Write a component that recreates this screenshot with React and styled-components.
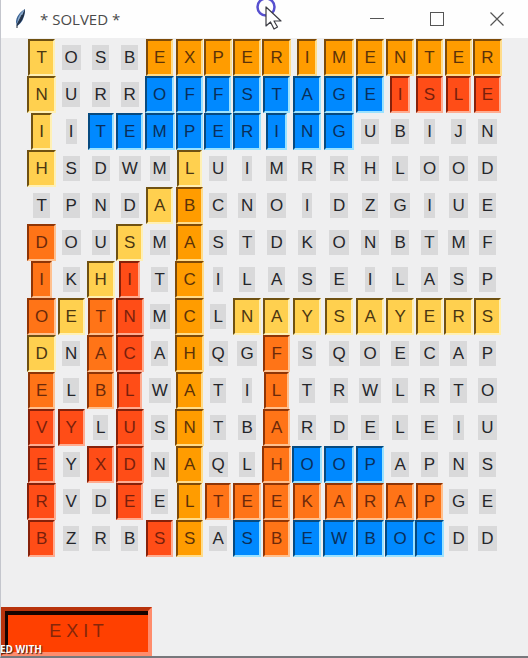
import React from "react";
import styled, { createGlobalStyle } from "styled-components";

const GlobalStyle = createGlobalStyle`
  * { box-sizing: border-box; }
  body {
    margin: 0;
    background: #efeff0;
    font-family: "Liberation Sans", Arial, sans-serif;
  }
`;

const tones = {
  y: { fill: "#ffd04f", dark: "#6f5112", light: "#fff0b4", ink: "#4b3612" },
  o: { fill: "#ff9c00", dark: "#7d4a08", light: "#ffdc8a", ink: "#5c3208" },
  d: { fill: "#ff7417", dark: "#8f3506", light: "#ffc08e", ink: "#6c290a" },
  r: { fill: "#ff4d17", dark: "#86210a", light: "#ffac90", ink: "#78200c" },
  b: { fill: "#0089ff", dark: "#064a80", light: "#9be2ff", ink: "#0a2f5a" },
};

/* Each row: the letters, then the tone of each letter ("." is an unsolved one). */
const rows = [
  ["TOSBEXPERIMENTER", "y...oooooooooooo"],
  ["NURROFFSTAGEISLE", "y...bbbbbbbbrrrr"],
  ["IITEMPERINGUBIJN", "y.bbbbbbbbb....."],
  ["HSDWMLUIMRRHLOOD", "y....y.........."],
  ["TPNDABCNOIDZGIUE", "....yo.........."],
  ["DOUSMASTDKONBTMF", "d..y.o.........."],
  ["IKHITCILASEILASP", "d.yr.o.........."],
  ["OETNMCLNAYSAYERS", "dydr.o.yyyyyyyyy"],
  ["DNACAHQGFSQOECAP", "y.dr.o..d......."],
  ["ELBLWATILTRWLRTO", "d.dr.o..d......."],
  ["VYLUSNTBARDELEIU", "rr.r.o..d......."],
  ["EYXDNAQLHOOPAPNS", "r.rr.o..dbbb...."],
  ["RVDEELTEEKARAPGE", "r..r.odddddddd.."],
  ["BZRBSSASBEWBOCDD", "r...ro.bdbbbbb.."],
];

const Window = styled.div`
  position: relative;
  display: flex;
  flex-direction: column;
  min-height: 100vh;
  overflow: hidden;
  border-left: 1px solid #c4c6cd;
  border-bottom: 2px solid #77787c;
  background: #efeff0;
`;

const TitleBar = styled.header`
  display: flex;
  align-items: center;
  height: 38px;
  padding-left: 13px;
  background: #fefefe;
`;

const Title = styled.h1`
  flex: 1;
  margin: 0 0 0 12px;
  font: 400 15px/20px "Open Sans", sans-serif;
  color: #4a4a4a;
`;

const Controls = styled.div`
  display: flex;
  padding-right: 1px;
`;

const WindowButton = styled.button`
  display: flex;
  align-items: center;
  justify-content: center;
  width: 60px;
  height: 36px;
  padding: 0;
  border: 0;
  background: transparent;
  color: #555;
`;

const Board = styled.main`
  display: grid;
  grid-template-columns:
    29fr 30fr 29fr 29fr 31fr 29fr 28fr 30fr
    29fr 32fr 32fr 30fr 30fr 29fr 29fr 29fr;
  grid-auto-rows: 37px;
  margin: 0 26px;
  padding-top: 1px;
`;

const Slot = styled.div`
  display: flex;
  align-items: center;
  justify-content: center;
`;

const Letter = styled.span`
  height: 25px;
  padding: 0 3px;
  background: #d9d9da;
  color: #25262a;
  font-size: 17px;
  line-height: 25px;
`;

const SolvedLetter = styled.span`
  height: 37px;
  padding: 0 6px;
  border: 2px solid;
  border-color: ${(p) => `${p.$tone.dark} ${p.$tone.light} ${p.$tone.light} ${p.$tone.dark}`};
  background: ${(p) => p.$tone.fill};
  color: ${(p) => p.$tone.ink};
  font-size: 17px;
  line-height: 33px;
`;

const Footer = styled.footer`
  position: relative;
  margin-top: 50px;
`;

const ExitButton = styled.button`
  display: block;
  width: 151px;
  height: 49px;
  padding: 0;
  border: 4px solid;
  border-color: #b8330c #ff8c6c #ff8c6c #b8330c;
  background: #ff4000;
  box-shadow: inset 3px 4px 0 #160400;
  color: #85260a;
  font: 18px/41px "Liberation Sans", Arial, sans-serif;
`;

const Watermark = styled.span`
  position: absolute;
  left: -1px;
  bottom: 0;
  font: 700 10px/13px "Open Sans", sans-serif;
  color: #fff;
  text-shadow: 1px 1px 1px #3a1a10;
`;

const Pointer = styled.svg`
  position: absolute;
  top: 0;
  left: 50%;
  margin-left: -12px;
`;

function Feather() {
  return (
    <svg width="14" height="22" viewBox="0 0 14 22" aria-hidden="true">
      <path d="M11 1C6 4 2 9 2 14l1 4c4-2 8-8 8-17z" fill="#365f91" />
      <path d="M11 1C7 4 3 9 3 17L8 8z" fill="#89a8ca" />
      <path d="M11 1c0 6-3 13-8 17l4-8z" fill="#202e43" />
      <path d="M8 7L3 17v3" fill="none" stroke="#1b2637" strokeWidth="1" />
    </svg>
  );
}

export default function App() {
  return (
    <>
      <GlobalStyle />
      <Window>
        <TitleBar>
          <Feather />
          <Title>* SOLVED *</Title>
          <Controls>
            <WindowButton type="button" aria-label="Minimize">
              <svg width="14" height="14" viewBox="0 0 14 14">
                <path d="M0 6.500H14" stroke="currentColor" />
              </svg>
            </WindowButton>
            <WindowButton type="button" aria-label="Maximize">
              <svg width="14" height="14" viewBox="0 0 14 14">
                <rect x="0.500" y="0.500" width="13" height="13" fill="none" stroke="currentColor" />
              </svg>
            </WindowButton>
            <WindowButton type="button" aria-label="Close">
              <svg width="14" height="14" viewBox="0 0 14 14">
                <path d="M0.500 0.500l13 13m0-13l-13 13" stroke="currentColor" strokeWidth="1.200" />
              </svg>
            </WindowButton>
          </Controls>
        </TitleBar>

        <Board>
          {rows.map(([letters, marks], r) =>
            [...letters].map((letter, c) => {
              const tone = tones[marks[c]];
              return (
                <Slot key={`${r}-${c}`}>
                  {tone ? <SolvedLetter $tone={tone}>{letter}</SolvedLetter> : <Letter>{letter}</Letter>}
                </Slot>
              );
            })
          )}
        </Board>

        <Footer>
          <ExitButton type="button">E X I T</ExitButton>
          <Watermark>ED WITH</Watermark>
        </Footer>

        <Pointer width="34" height="34" viewBox="0 0 34 34" aria-hidden="true">
          <circle cx="13" cy="7" r="8.500" fill="none" stroke="#5750cf" strokeWidth="2.500" />
          <path
            d="M13 7V26l4.500-4 3.500 7 3.500-2-3.500-6h7z"
            fill="#fff"
            stroke="#3d3d44"
            strokeWidth="1.200"
            strokeLinejoin="round"
          />
        </Pointer>
      </Window>
    </>
  );
}
